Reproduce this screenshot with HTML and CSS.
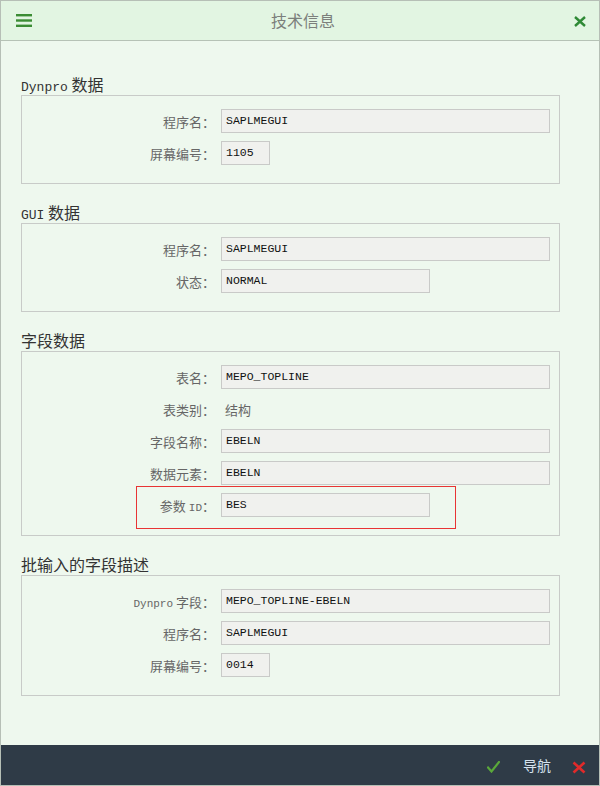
FILE: index.html
```html
<!DOCTYPE html>
<html lang="zh">
<head>
<meta charset="utf-8">
<title>技术信息</title>
<link rel="stylesheet" href="styles.css">
</head>
<body>
<div class="window">
  <header class="header">
    <svg class="menu" width="16" height="13" viewBox="0 0 16 13"><rect x="0" y="0" width="16" height="2.4" fill="#3b8c34"/><rect x="0" y="5.3" width="16" height="2.4" fill="#3b8c34"/><rect x="0" y="10.6" width="16" height="2.4" fill="#3b8c34"/></svg>
    <div class="title">技术信息</div>
    <svg class="close" width="12" height="11" viewBox="0 0 12 11"><path d="M1 1 L11 10 M11 1 L1 10" stroke="#2f8a36" stroke-width="2.4" fill="none"/></svg>
  </header>
  <main class="content">
    <section class="group">
      <div class="gtitle"><span class="lat">Dynpro</span> 数据</div>
      <div class="box">
        <div class="row"><span class="label">程序名：</span><span class="field long">SAPLMEGUI</span></div>
        <div class="row"><span class="label">屏幕编号：</span><span class="field short">1105</span></div>
      </div>
    </section>
    <section class="group">
      <div class="gtitle"><span class="lat">GUI</span> 数据</div>
      <div class="box">
        <div class="row"><span class="label">程序名：</span><span class="field long">SAPLMEGUI</span></div>
        <div class="row"><span class="label">状态：</span><span class="field mid">NORMAL</span></div>
      </div>
    </section>
    <section class="group">
      <div class="gtitle">字段数据</div>
      <div class="box">
        <div class="row"><span class="label">表名：</span><span class="field long">MEPO_TOPLINE</span></div>
        <div class="row"><span class="label">表类别：</span><span class="plain">结构</span></div>
        <div class="row"><span class="label">字段名称：</span><span class="field long">EBELN</span></div>
        <div class="row"><span class="label">数据元素：</span><span class="field long">EBELN</span></div>
        <div class="row marked"><span class="label">参数 <span class="lat-s">ID</span>：</span><span class="field mid">BES</span><span class="highlight"></span></div>
      </div>
    </section>
    <section class="group">
      <div class="gtitle">批输入的字段描述</div>
      <div class="box">
        <div class="row"><span class="label"><span class="lat-s">Dynpro</span> 字段：</span><span class="field long">MEPO_TOPLINE-EBELN</span></div>
        <div class="row"><span class="label">程序名：</span><span class="field long">SAPLMEGUI</span></div>
        <div class="row"><span class="label">屏幕编号：</span><span class="field short">0014</span></div>
      </div>
    </section>
  </main>
  <footer class="footer">
    <svg class="ok" width="13" height="12" viewBox="0 0 13 12"><path d="M1 6.5 L4.5 10.5 L12 1" stroke="#5aa83a" stroke-width="2.2" fill="none" stroke-linecap="square"/></svg>
    <span class="nav">导航</span>
    <svg class="cancel" width="14" height="13" viewBox="0 0 14 13"><path d="M1.5 1.5 L12.5 11.5 M12.5 1.5 L1.5 11.5" stroke="#e02a2a" stroke-width="2.6" fill="none"/></svg>
  </footer>
</div>
</body>
</html>
```
FILE: styles.css
```css
html, body {
  margin: 0;
  padding: 0;
}
body {
  font-family: "Noto Sans CJK SC", "DejaVu Sans", sans-serif;
  background: #eef8ee;
}
.window {
  width: 600px;
  height: 786px;
  box-sizing: border-box;
  border: 1px solid #b6bfb6;
  display: flex;
  flex-direction: column;
  background: #eef8ee;
}
.header {
  height: 39px;
  flex: none;
  background: #e2f5e2;
  border-bottom: 1px solid #b6c2b6;
  display: flex;
  align-items: center;
  padding: 0 13px 0 15px;
}
.menu {
  flex: none;
  display: block;
}
.title {
  flex: 1;
  text-align: center;
  font-size: 16px;
  color: #7c7f7c;
  line-height: 20px;
  margin-top: -2px;
}
.close {
  flex: none;
  display: block;
  margin-top: 2px;
}
.content {
  flex: 1;
  padding: 34px 39px 0 20px;
  display: flex;
  flex-direction: column;
  gap: 19px;
}
.gtitle {
  font-size: 16px;
  line-height: 18px;
  height: 20px;
  color: #333;
}
.lat {
  font-family: "Liberation Mono", monospace;
  font-size: 13px;
}
.lat-s {
  font-family: "Liberation Mono", monospace;
  font-size: 11px;
}
.box {
  border: 1px solid #c8cbc8;
  padding: 13px 9px 18px 0;
  display: flex;
  flex-direction: column;
  gap: 8px;
}
.row {
  display: grid;
  grid-template-columns: 193px auto;
  column-gap: 6px;
  align-items: center;
  height: 24px;
  position: relative;
  justify-content: start;
}
.label {
  text-align: right;
  font-size: 13px;
  color: #666;
  white-space: nowrap;
}
.field {
  box-sizing: border-box;
  height: 24px;
  border: 1px solid #c9cac8;
  background: #f0f1ee;
  font-family: "Liberation Mono", monospace;
  font-size: 11.5px;
  line-height: 22px;
  color: #111;
  padding-left: 4px;
  white-space: nowrap;
}
.field.long { width: 329px; }
.field.mid { width: 209px; }
.field.short { width: 49px; }
.plain {
  font-size: 13px;
  color: #666;
  padding-left: 4px;
}
.highlight {
  position: absolute;
  left: 114px;
  top: -7px;
  width: 318px;
  height: 41px;
  border: 1px solid #e83434;
  pointer-events: none;
}
.footer {
  height: 40px;
  flex: none;
  background: #2f3b47;
  display: flex;
  align-items: center;
  justify-content: flex-end;
  padding: 0 13px 0 0;
  gap: 0;
}
.ok {
  display: block;
  margin-right: 23px;
  margin-top: 4px;
}
.nav {
  font-size: 14px;
  color: #d6e2ee;
  margin-right: 21px;
  line-height: 20px;
}
.cancel {
  display: block;
  margin-top: 4px;
}
```
